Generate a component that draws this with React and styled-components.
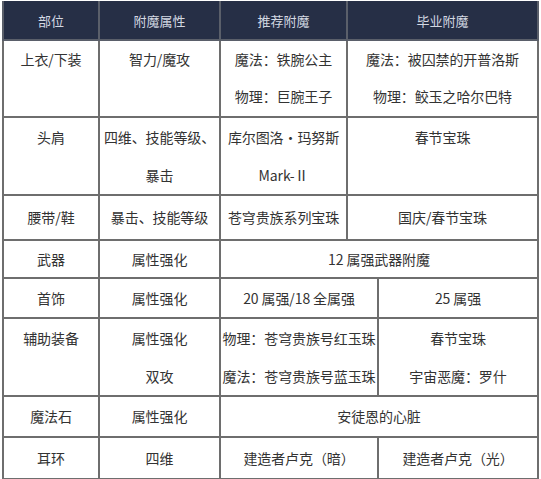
import React from "react";
import styled, { createGlobalStyle } from "styled-components";

const Global = createGlobalStyle`
  html, body { margin: 0; padding: 0; background: #ffffff; }
  body { font-family: "Noto Sans CJK SC", "Noto Sans", sans-serif; }
`;

const Page = styled.div`
  padding: 1px 4px 0 2px;
  width: 535px;
`;

const Table = styled.table`
  border-collapse: collapse;
  table-layout: fixed;
  width: 535px;
  color: #333333;
  font-size: 14px;
`;

const Col = styled.col`
  width: ${({ $w }) => $w}px;
`;

const HeadCell = styled.th`
  background: #262f46;
  color: #d3d8e2;
  font-weight: 400;
  font-size: 13px;
  height: 38px;
  padding: 0;
  border: 2px solid #5a5f6a;
  border-top: none;
  text-align: center;
  vertical-align: middle;
`;

const Cell = styled.td`
  border: 2px solid #6e6e6e;
  padding: 0;
  height: ${({ $h }) => $h}px;
  line-height: ${({ $lh }) => $lh}px;
  text-align: center;
  vertical-align: top;
  white-space: nowrap;
  letter-spacing: -0.1px;
`;

const Line = styled.div`
  line-height: ${({ $lh }) => $lh}px;
`;

const Lines = ({ items, lh }) => items.map((t, i) => <Line key={i} $lh={lh}>{t}</Line>);

const Row = ({ cells, h, lh }) => (
  <tr>
    {cells.map((c, i) => (
      <Cell key={i} colSpan={c.span || 1} $h={h} $lh={lh}>
        {Array.isArray(c.text) ? <Lines items={c.text} lh={lh} /> : c.text}
      </Cell>
    ))}
  </tr>
);

const cols = [96, 121, 127, 31, 160];

const rows = [
  { h: 75, lh: 37, cells: [{ text: "上衣/下装" }, { text: "智力/魔攻" }, { text: ["魔法：铁腕公主", "物理：巨腕王子"] }, { text: ["魔法：被囚禁的开普洛斯", "物理：鲛玉之哈尔巴特"], span: 2 }] },
  { h: 76, lh: 38, cells: [{ text: "头肩" }, { text: ["四维、技能等级、", "暴击"] }, { text: ["库尔图洛·玛努斯", "Mark-Ⅱ"] }, { text: "春节宝珠", span: 2 }] },
  { h: 43, lh: 43, cells: [{ text: "腰带/鞋" }, { text: "暴击、技能等级" }, { text: "苍穹贵族系列宝珠" }, { text: "国庆/春节宝珠", span: 2 }] },
  { h: 36, lh: 36, cells: [{ text: "武器" }, { text: "属性强化" }, { text: "12 属强武器附魔", span: 3 }] },
  { h: 38, lh: 38, cells: [{ text: "首饰" }, { text: "属性强化" }, { text: "20 属强/18 全属强", span: 2 }, { text: "25 属强" }] },
  { h: 76, lh: 38, cells: [{ text: "辅助装备" }, { text: ["属性强化", "双攻"] }, { text: ["物理：苍穹贵族号红玉珠", "魔法：苍穹贵族号蓝玉珠"], span: 2 }, { text: ["春节宝珠", "宇宙恶魔：罗什"] }] },
  { h: 39, lh: 39, cells: [{ text: "魔法石" }, { text: "属性强化" }, { text: "安徒恩的心脏", span: 3 }] },
  { h: 40, lh: 40, cells: [{ text: "耳环" }, { text: "四维" }, { text: "建造者卢克（暗）", span: 2 }, { text: "建造者卢克（光）" }] },
];

export default function App() {
  return (
    <>
      <Global />
      <Page>
        <Table>
          <colgroup>
            {cols.map((w, i) => (
              <Col key={i} $w={w} />
            ))}
          </colgroup>
          <thead>
            <tr>
              <HeadCell>部位</HeadCell>
              <HeadCell>附魔属性</HeadCell>
              <HeadCell>推荐附魔</HeadCell>
              <HeadCell colSpan={2}>毕业附魔</HeadCell>
            </tr>
          </thead>
          <tbody>
            {rows.map((r, i) => (
              <Row key={i} {...r} />
            ))}
          </tbody>
        </Table>
      </Page>
    </>
  );
}
